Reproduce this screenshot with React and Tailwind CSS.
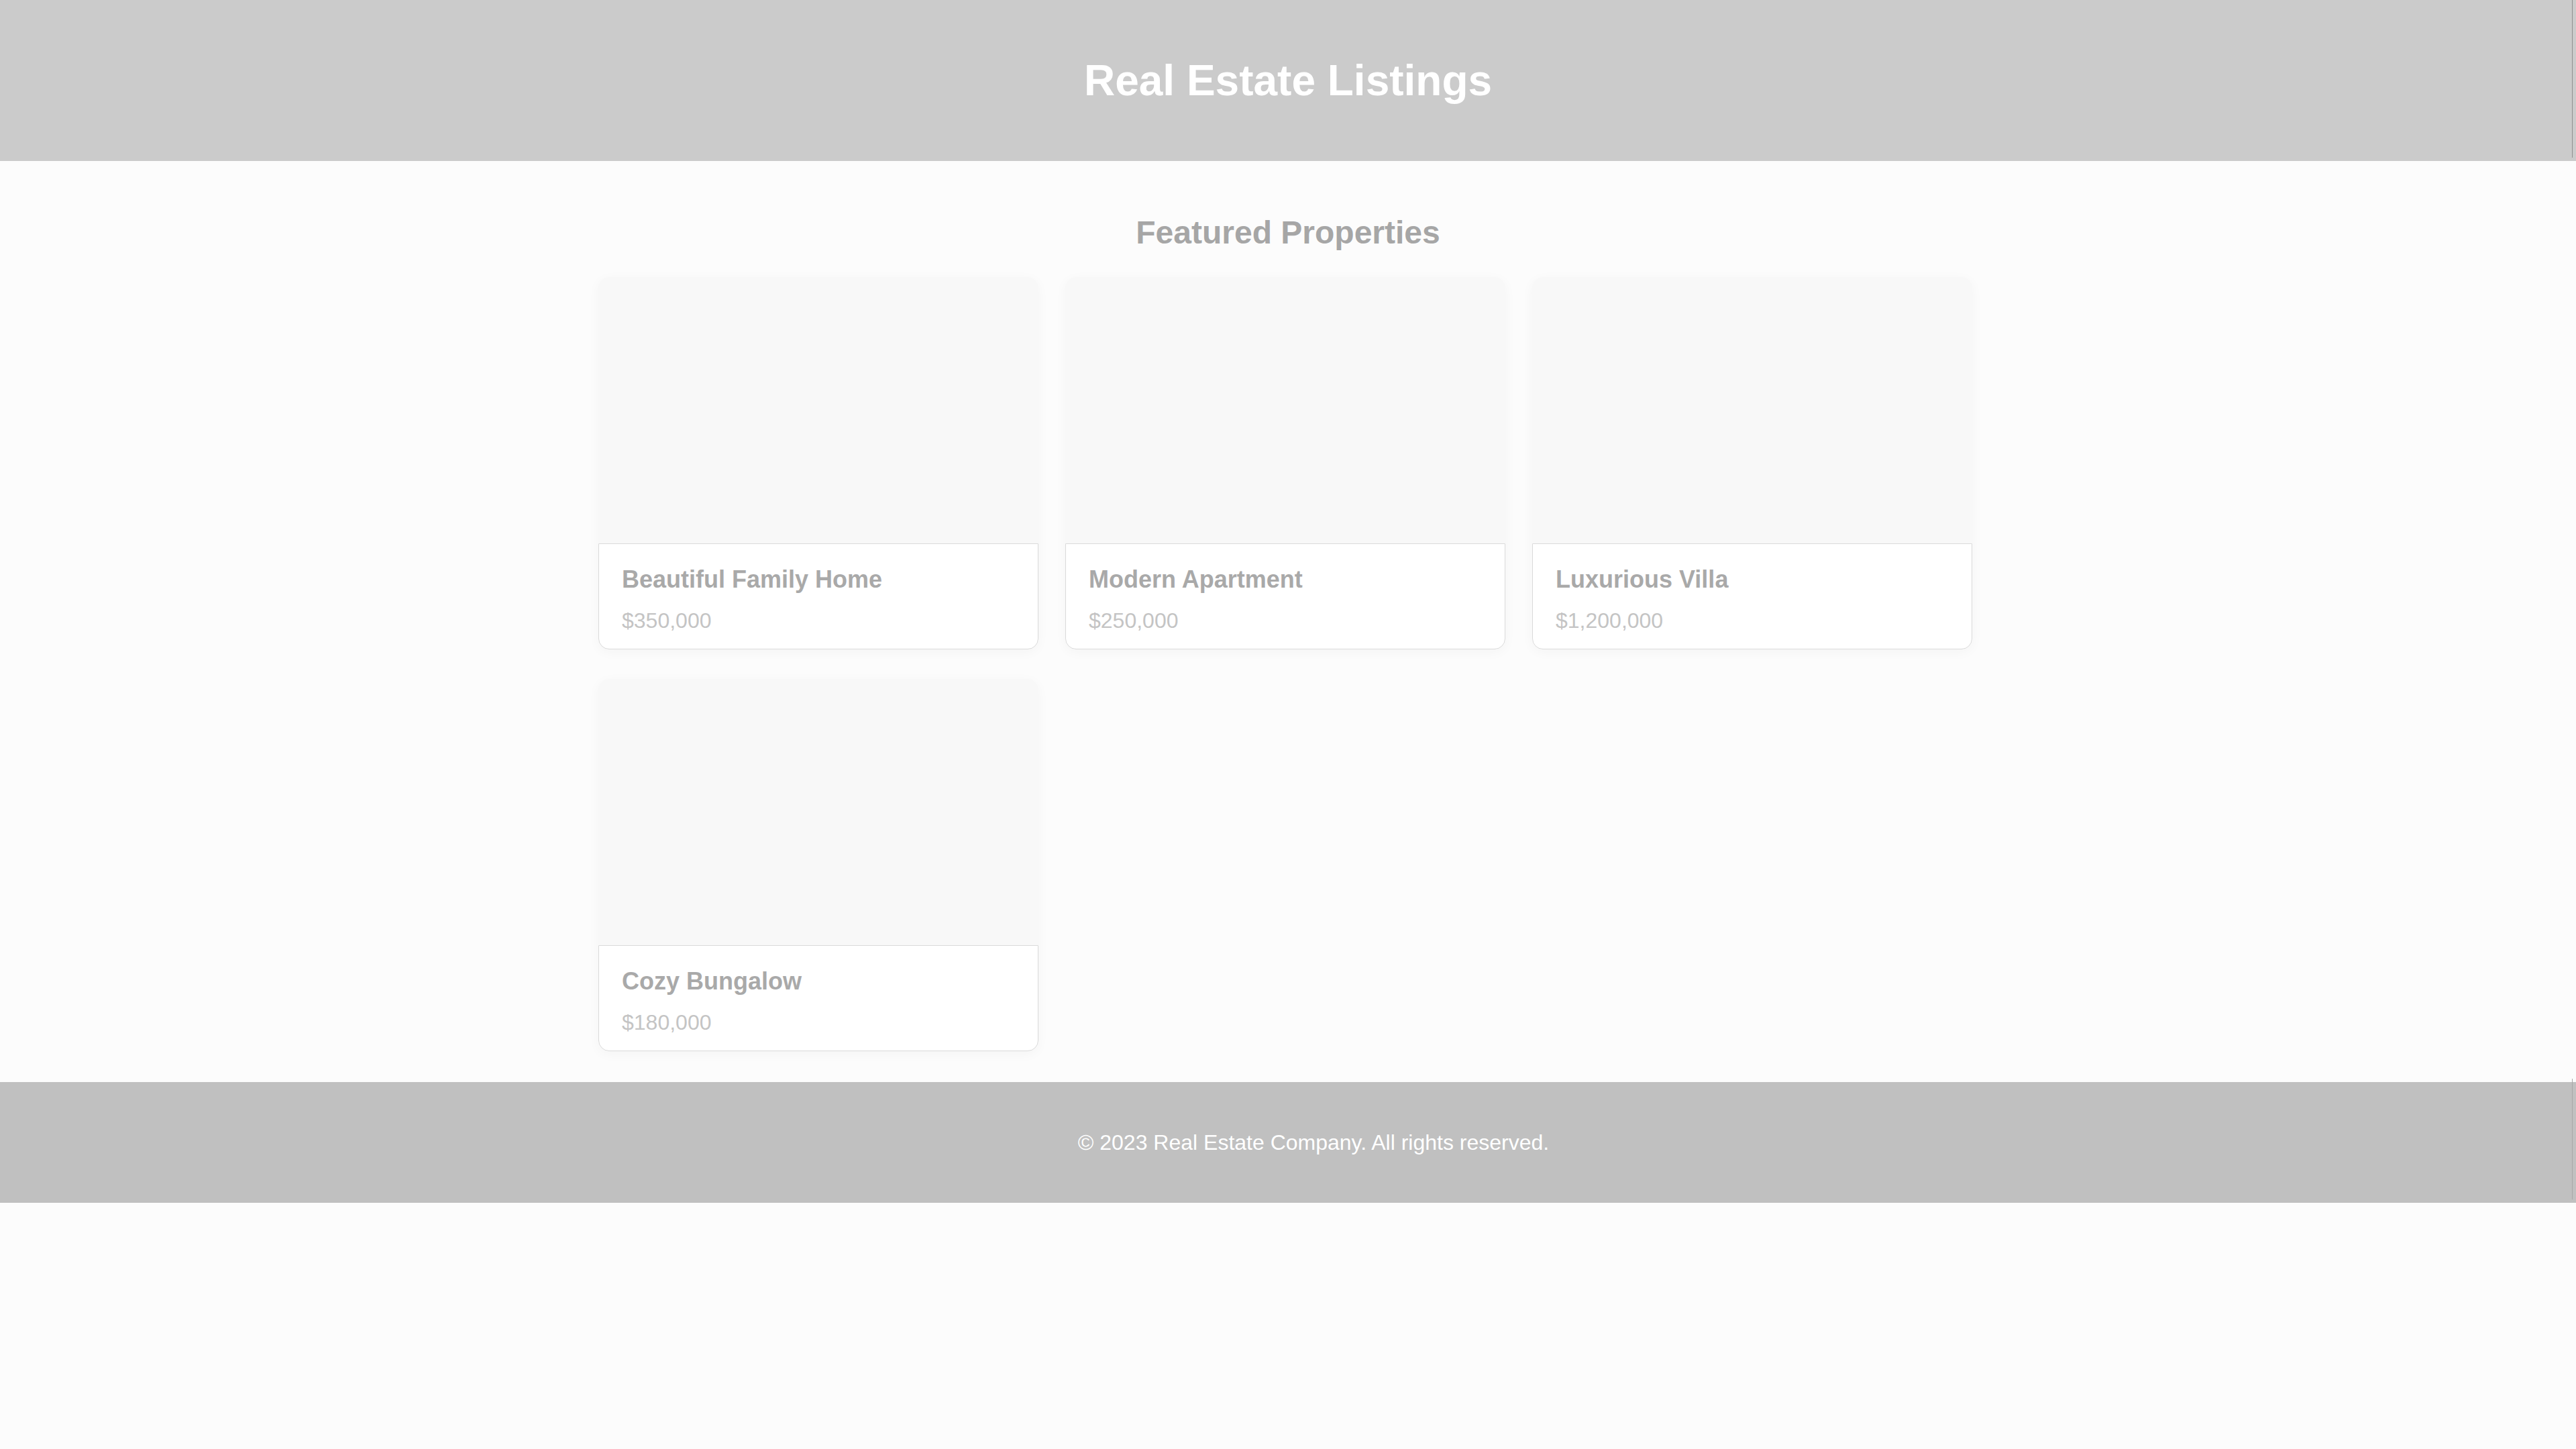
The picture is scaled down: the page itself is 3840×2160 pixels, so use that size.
import React from 'react';

const properties = [
  { id: 1, title: 'Beautiful Family Home', price: '$350,000' },
  { id: 2, title: 'Modern Apartment', price: '$250,000' },
  { id: 3, title: 'Luxurious Villa', price: '$1,200,000' },
  { id: 4, title: 'Cozy Bungalow', price: '$180,000' },
];

function PropertyCard({ property }) {
  return (
    <div className="rounded-[16px] shadow-[0_4px_18px_rgba(0,0,0,0.035)]">
      {/* Image placeholder */}
      <div className="h-[397px] bg-[#f8f8f8] rounded-t-[16px]" />
      {/* Info */}
      <div className="h-[158px] bg-white border border-[#dadada] rounded-b-[16px] pl-[34px] pt-[35px]">
        <h3 className="text-[36px] leading-none font-bold text-[#a9a9a9]">{property.title}</h3>
        <p className="mt-[27px] text-[32px] leading-none text-[#c4c4c4]">{property.price}</p>
      </div>
    </div>
  );
}

export default function App() {
  return (
    <div className="min-h-screen bg-[#fcfcfc] font-['Liberation_Sans',Arial,sans-serif]">
      {/* Header */}
      <header className="relative h-[240px] bg-[#cbcbcb] flex items-center justify-center">
        <h1 className="text-[64px] leading-none font-bold text-white">Real Estate Listings</h1>
        <div className="absolute top-0 right-[5px] w-[1px] h-[235px] bg-[#909090]" />
      </header>

      {/* Listings */}
      <main className="pt-[83px] pb-[46px]">
        <h2 className="text-[48px] leading-none font-bold text-[#a6a6a6] text-center">Featured Properties</h2>
        <div className="pr-[8px] mt-[42px]">
          <div className="w-[2048px] mx-auto grid grid-cols-3 gap-x-[40px] gap-y-[44px]">
            {properties.map(property => (
              <PropertyCard key={property.id} property={property} />
            ))}
          </div>
        </div>
      </main>

      {/* Footer */}
      <footer className="relative h-[180px] bg-[#c0c0c0] flex items-center justify-center pl-[76px]">
        <p className="text-[32px] leading-none text-white">© 2023 Real Estate Company. All rights reserved.</p>
        <div className="absolute -top-[5px] right-[5px] w-[1px] h-[180px] bg-[#a8a8a8]" />
      </footer>
    </div>
  );
}
